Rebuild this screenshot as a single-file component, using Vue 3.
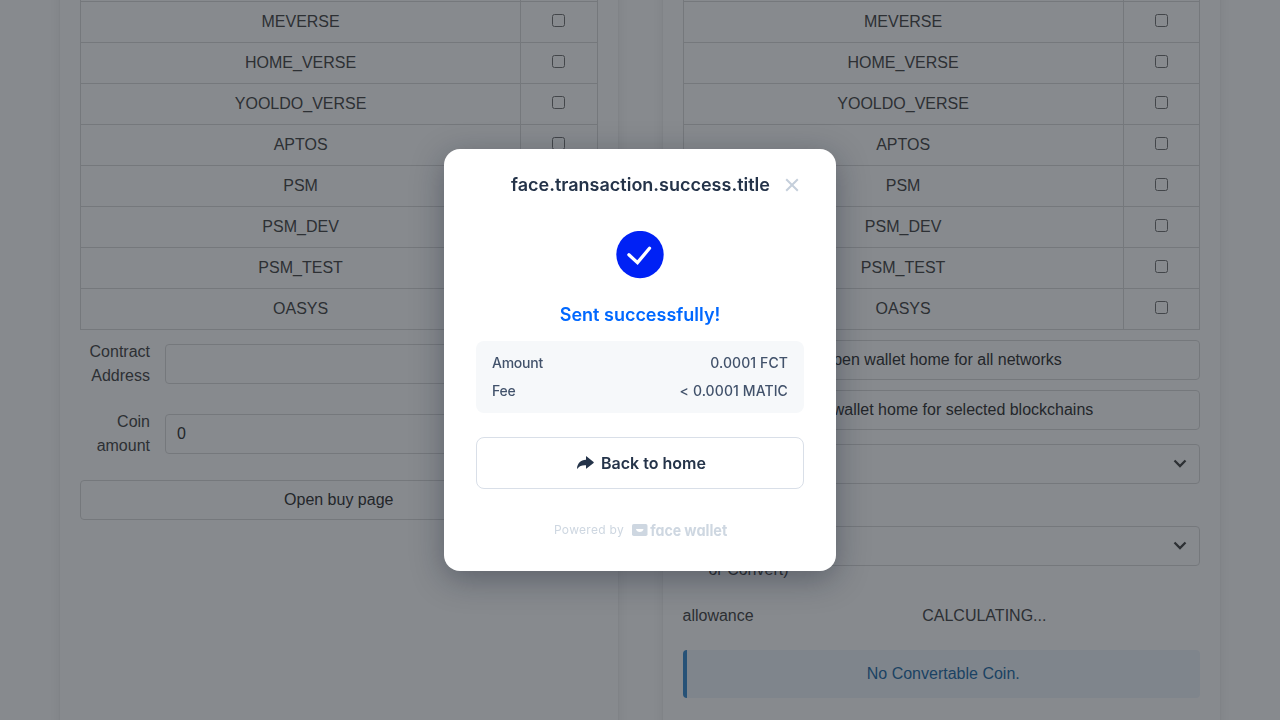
<script setup>
const networks = ['MEVERSE', 'HOME_VERSE', 'YOOLDO_VERSE', 'APTOS', 'PSM', 'PSM_DEV', 'PSM_TEST', 'OASYS']
const details = [
  { label: 'Amount', value: '0.0001 FCT' },
  { label: 'Fee', value: '< 0.0001 MATIC' },
]
</script>

<template>
  <div class="page">
    <main class="columns">
      <section class="box">
        <table class="table">
          <tbody>
            <tr class="spacer"><td></td><td class="pick"></td></tr>
            <tr v-for="name in networks" :key="name">
              <td>{{ name }}</td>
              <td class="pick"><label class="checkbox"><input type="checkbox" /></label></td>
            </tr>
          </tbody>
        </table>
        <div class="field first">
          <label class="label">Contract Address</label>
          <input class="input" type="text" />
        </div>
        <div class="field second">
          <label class="label">Coin amount</label>
          <input class="input" type="text" value="0" />
        </div>
        <button class="button buy">Open buy page</button>
      </section>

      <section class="box">
        <table class="table">
          <tbody>
            <tr class="spacer"><td></td><td class="pick"></td></tr>
            <tr v-for="name in networks" :key="name">
              <td>{{ name }}</td>
              <td class="pick"><label class="checkbox"><input type="checkbox" /></label></td>
            </tr>
          </tbody>
        </table>
        <button class="button home">Open wallet home for all networks</button>
        <button class="button home">Open wallet home for selected blockchains</button>
        <div class="select-box">
          <svg width="14" height="9" viewBox="0 0 14 9"><path d="M1.5 1.5 7 7 12.5 1.5" /></svg>
        </div>
        <div class="convert">
          <label class="convert-label">Coin (Swap<br />or Convert)</label>
          <div class="select-box">
            <svg width="14" height="9" viewBox="0 0 14 9"><path d="M1.5 1.5 7 7 12.5 1.5" /></svg>
          </div>
        </div>
        <div class="allowance"><span>allowance</span><span class="calc">CALCULATING...</span></div>
        <div class="message">No Convertable Coin.</div>
      </section>
    </main>

    <div class="overlay">
      <div class="modal">
        <header class="modal-head">
          <h1>face.transaction.success.title</h1>
          <svg class="close" width="14" height="14" viewBox="0 0 14 14"><path d="M1.2 1.2 12.8 12.8M12.8 1.2 1.2 12.8" /></svg>
        </header>
        <svg class="check" width="48" height="48" viewBox="0 0 48 48">
          <circle cx="24" cy="23.6" r="23.7" />
          <path d="M12.9 23.8 21.5 31.6 33.5 17.3" />
        </svg>
        <h2>Sent successfully!</h2>
        <dl class="details">
          <div v-for="d in details" :key="d.label"><dt>{{ d.label }}</dt><dd>{{ d.value }}</dd></div>
        </dl>
        <button class="back">
          <svg width="20" height="14" viewBox="-3 0 20 14"><path d="M9 .4Q9 0 9.4.3L16.6 6.1Q17 6.5 16.6 6.9L9.5 12.6Q9 13 9 12.4V9.3C5 9 2.6 10 .6 12.6Q0 13.2 0 12.3C.5 7.2 3.5 4 9 3.7Z" /></svg>
          <span>Back to home</span>
        </button>
        <footer class="powered">
          <span>Powered by</span>
          <svg width="100" height="22" viewBox="0 -2 100 22">
            <rect x="0" y="3" width="15.5" height="12" rx="1.8" />
            <path d="M4 8H11.5C11.2 12 4.4 12 4 8Z" fill="#fff" />
            <text x="18.3" y="14.9" textLength="31" lengthAdjust="spacingAndGlyphs">face</text>
            <text x="52.3" y="14.9" textLength="43" lengthAdjust="spacingAndGlyphs">wallet</text>
          </svg>
        </footer>
      </div>
    </div>
  </div>
</template>

<style>
body {
  margin: 0;
  overflow: hidden;
}
</style>

<style scoped>
* {
  box-sizing: border-box;
}
.page {
  display: flow-root;
  height: 720px;
  overflow: hidden;
  background: #fff;
  font: 16px/24px "Liberation Sans", Arial, sans-serif;
  color: #4a4a4a;
}
.columns {
  display: flex;
  gap: 45px;
  width: 1160px;
  height: 900px;
  margin: -40px auto 0;
}
.box {
  flex: 1;
  min-width: 0;
  padding: 0 20px 20px;
  border-radius: 0 0 6px 6px;
  background: #fff;
  box-shadow: 0 8px 16px -2px rgba(10, 10, 10, 0.1), 0 0 0 1px rgba(10, 10, 10, 0.02);
}
.table {
  width: 100%;
  border-collapse: collapse;
  table-layout: fixed;
  text-align: center;
  color: #4a4a4a;
}
.table td {
  padding: 8px 12px;
  border: 1px solid #dbdbdb;
  vertical-align: top;
}
.table .spacer td {
  height: 41px;
}
.table .pick {
  width: 76.3px;
}
.checkbox {
  display: inline-block;
  line-height: 20px;
}
.checkbox input {
  margin: 0;
  vertical-align: baseline;
}
.field {
  display: flex;
  align-items: center;
  gap: 15px;
}
.first {
  margin-top: 10px;
}
.second {
  margin-top: 22px;
}
.label {
  width: 70px;
  text-align: right;
  color: #4a4a4a;
}
.input {
  flex: 1;
  min-width: 0;
  height: 40px;
  padding: 0 11px;
  border: 1px solid #dbdbdb;
  border-radius: 4px;
  background: #fff;
  font: inherit;
  color: #363636;
}
.button {
  display: block;
  width: 100%;
  height: 40px;
  padding: 0;
  border: 1px solid #dbdbdb;
  border-radius: 4px;
  background: #fff;
  font: inherit;
  color: #363636;
}
.buy {
  margin-top: 22px;
}
.home {
  margin-top: 10px;
}
.select-box {
  display: flex;
  align-items: center;
  justify-content: flex-end;
  height: 40px;
  margin-top: 14px;
  padding: 0 12px 2px 0;
  border: 1px solid #dbdbdb;
  border-radius: 4px;
}
.select-box svg {
  fill: none;
  stroke: #4a4a4a;
  stroke-width: 2.3;
}
.convert {
  display: flex;
  gap: 15px;
  height: 72px;
  margin-top: 26px;
}
.convert-label {
  width: 106px;
  padding-top: 24px;
  text-align: right;
}
.convert .select-box {
  flex: 1;
  margin-top: 16px;
}
.allowance {
  display: flex;
  gap: 15px;
  margin-top: 22px;
}
.calc {
  flex: 1;
  text-align: center;
}
.message {
  margin-top: 22px;
  padding: 12px 16px;
  border-left: 4px solid #3e8ed0;
  border-radius: 4px;
  background: #eff5fb;
  color: #296fa8;
  text-align: center;
}
.overlay {
  position: fixed;
  inset: 0;
  display: flex;
  align-items: center;
  justify-content: center;
  background: rgba(15, 21, 29, 0.5);
}
.modal {
  display: flex;
  flex-direction: column;
  align-items: center;
  width: 392px;
  height: 422px;
  padding: 24px 32px;
  border-radius: 16px;
  background: #fff;
  box-shadow: 0 8px 32px rgba(15, 21, 41, 0.36);
  font-family: Inter, sans-serif;
}
.modal-head {
  position: relative;
  width: 100%;
  text-align: center;
}
h1 {
  margin: 0;
  padding-left: 1px;
  font-size: 18px;
  font-weight: 600;
  line-height: 24px;
  color: #243349;
}
.close {
  position: absolute;
  top: 5px;
  right: 5px;
  fill: none;
  stroke: #c5cfdb;
  stroke-width: 2;
}
.check {
  flex: none;
  margin-top: 34px;
  fill: #0021f5;
}
.check path {
  fill: none;
  stroke: #fff;
  stroke-width: 3.3;
  stroke-linecap: round;
}
h2 {
  margin: 24px 0 14px;
  font-size: 18px;
  font-weight: 600;
  line-height: 24px;
  color: #0068ff;
}
.details {
  display: flex;
  flex-direction: column;
  gap: 8px;
  width: 100%;
  margin: 0;
  padding: 12px 16px;
  border-radius: 8px;
  background: #f6f8fa;
  font-size: 14px;
  font-weight: 500;
  line-height: 20px;
  color: #42526b;
}
.details div {
  display: flex;
  justify-content: space-between;
}
.details dt {
  letter-spacing: -0.25px;
}
.details dd {
  margin: 0;
  letter-spacing: 0.1px;
}
.back {
  display: flex;
  align-items: center;
  justify-content: center;
  gap: 7px;
  width: 100%;
  height: 52px;
  margin-top: 24px;
  padding: 0;
  border: 1px solid #d9dfe8;
  border-radius: 8px;
  background: #fff;
  font: 600 16px/24px Inter, sans-serif;
  color: #243349;
}
.back svg {
  fill: #243349;
}
.powered {
  display: flex;
  align-items: center;
  gap: 8px;
  margin: 30px 0 0 6px;
  font-size: 12px;
  line-height: 18px;
  letter-spacing: 0.3px;
  color: #ced7e1;
}
.powered svg {
  fill: #ced7e1;
}
.powered text {
  font: 650 15.5px Inter, sans-serif;
  font-feature-settings: "cv11";
  letter-spacing: 0;
}
</style>
